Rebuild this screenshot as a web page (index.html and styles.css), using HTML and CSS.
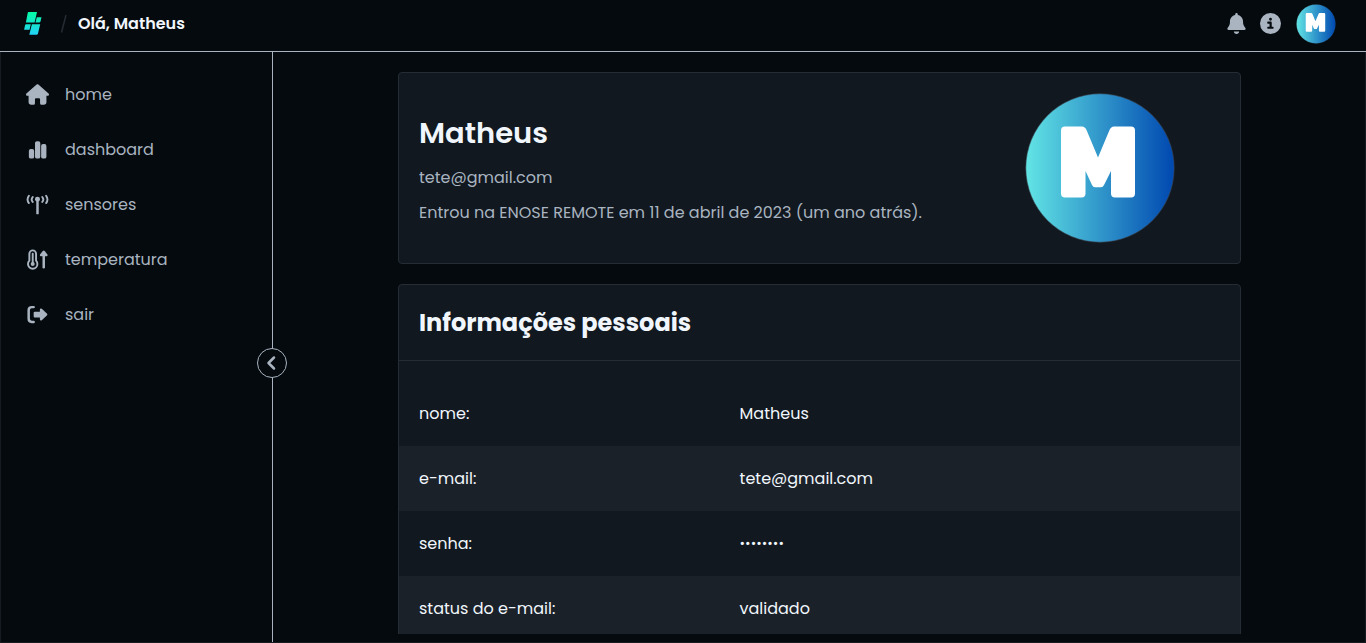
FILE: index.html
```html
<!DOCTYPE html>
<html lang="pt-BR">
<head>
<meta charset="utf-8">
<meta name="viewport" content="width=device-width, initial-scale=1">
<title>Perfil</title>
<link rel="stylesheet" href="styles.css">
</head>
<body>
<div class="app">
  <header class="topbar">
    <a class="logo" href="#" aria-label="Início">
      <svg viewBox="0 0 20 24" width="20" height="24" aria-hidden="true">
        <defs><linearGradient id="brand" gradientUnits="userSpaceOnUse" x1="0" y1="0" x2="0" y2="24"><stop offset="0" stop-color="#05f9a3"/><stop offset="1" stop-color="#24d0fb"/></linearGradient></defs>
        <path fill="url(#brand)" d="M4.500 0H13L10.600 10.600H1.900L3.700 1Q3.900 0 4.500 0ZM12.800 5.200H17.500L16.500 9.500Q16.200 10.600 15 10.600H11.500ZM2.200 12.300H6.800L5.500 17.800H.1L1 13.400Q1.200 12.300 2.200 12.300ZM7.900 12.300H16.200L14 21.600Q13.700 22.800 12.500 22.800H5.300Z"/>
      </svg>
    </a>
    <svg class="slash" viewBox="0 0 8 20" width="8" height="20" aria-hidden="true"><path d="M6 1 1.500 18.500"/></svg>
    <strong class="greeting">Olá, Matheus</strong>
    <div class="actions">
      <button class="icon-button" type="button" aria-label="Notificações">
        <svg viewBox="0 0 448 512" width="19" height="21" aria-hidden="true"><path d="M224 0c-17.700 0-32 14.300-32 32v19.200C119 66 64 130.600 64 208v18.800c0 47-17.300 92.400-48.500 127.600l-7.400 8.300c-8.400 9.400-10.400 22.900-5.300 34.400S19.400 416 32 416h384c12.600 0 24-7.400 29.200-18.900s3.100-25-5.300-34.400l-7.400-8.300C401.300 319.200 384 273.900 384 226.800V208c0-77.400-55-142-128-156.800V32c0-17.700-14.300-32-32-32zm45.300 493.300c12-12 18.700-28.300 18.700-45.300H160c0 17 6.700 33.300 18.700 45.300s28.300 18.700 45.300 18.700 33.300-6.700 45.300-18.700z"/></svg>
      </button>
      <button class="icon-button" type="button" aria-label="Informações">
        <svg viewBox="0 0 512 512" width="21" height="21" aria-hidden="true"><path fill-rule="evenodd" d="M256 0a256 256 0 1 0 0 512 256 256 0 1 0 0-512zM200 210h58c16 0 28 12 28 28v98h22c14 0 24 11 24 24s-10 26-24 26H200c-14 0-24-12-24-26s10-24 24-24h32v-74h-32c-14 0-24-12-24-26s10-26 24-26zm56-92a34 34 0 1 1 0 68 34 34 0 1 1 0-68z"/></svg>
      </button>
      <button class="profile-button" type="button" aria-label="Perfil">
        <svg class="avatar" viewBox="-1 -1 152 152" width="40" height="40" aria-hidden="true"><use href="#avatar-art"/></svg>
      </button>
    </div>
  </header>
  <div class="body">
    <aside class="sidebar">
      <nav class="menu">
        <a class="menu-item" href="#"><svg viewBox="0 0 576 512" width="23" height="21" aria-hidden="true"><path d="M575.800 255.500c0 18-15 32.100-32 32.100h-32l.7 160.200c0 36-28 64.200-64 64.200h-56c-22 0-40-18-40-40v-88c0-17.700-14.300-32-32-32h-64c-17.700 0-32 14.300-32 32v88c0 22-18 40-40 40h-56c-36 0-64-28-64-64V287.600H32c-18 0-32-14-32-32.100 0-9 3-17 10-24L266.400 8c7-7 15-8 22-8s15 2 21 7l255.400 224.500c8 7 12 15 11 24z"/></svg>home</a>
        <a class="menu-item" href="#"><svg viewBox="0 0 24 21" width="23" height="21" aria-hidden="true"><rect x="3" y="10" width="5.500" height="10" rx="2"/><rect x="9.400" y="1.800" width="5.500" height="18.200" rx="2"/><rect x="15.800" y="4.800" width="5.500" height="15.200" rx="2"/></svg>dashboard</a>
        <a class="menu-item" href="#"><svg class="line" viewBox="0 0 24 21" width="23" height="21" aria-hidden="true"><path d="M3 1.500Q.2 5.200 3 9M7 2.700Q4.800 5.200 7 7.800M21 1.500Q23.800 5.200 21 9M17 2.700Q19.200 5.200 17 7.800"/><path class="thick" d="M12 6V19.500"/><circle class="solid" cx="12" cy="5" r="2.600"/></svg>sensores</a>
        <a class="menu-item" href="#"><svg class="line" viewBox="0 0 24 21" width="23" height="21" aria-hidden="true"><path d="M3.500 4.500a3.500 3.500 0 0 1 7 0v7.200q1.400 1.500 1.400 3.500a4.900 4.900 0 0 1-9.800 0q0-2 1.400-3.500ZM7 4.500v10"/><circle class="solid" cx="7" cy="15.200" r="2.100"/><path class="thick" d="M18.500 18.500V5"/><path class="solid" d="M17.500 1.500Q18.500.8 19.500 1.500L22.400 5.200Q22.800 7 21.500 7H15.500Q14.200 7 14.600 5.200Z"/></svg>temperatura</a>
        <a class="menu-item" href="#"><svg class="line" viewBox="0 0 24 21" width="23" height="21" aria-hidden="true"><path class="thick" d="M8 2.800H6Q2.800 2.800 2.800 6V15Q2.800 18.200 6 18.200H8"/><path class="solid" d="M9.200 7.500H14.500V5.300Q14.800 3.800 16.500 4.600L22 9.700Q22.600 10.500 22 11.300L16.500 16.400Q14.800 17.200 14.500 15.700V13.500H9.200Q8 13.500 8 12.200V8.800Q8 7.500 9.200 7.500Z"/></svg>sair</a>
      </nav>
      <button class="collapse" type="button" aria-label="Recolher menu"><svg viewBox="0 0 12 16" width="12" height="16" aria-hidden="true"><path d="M8 2.500 2.500 8 8 13.500"/></svg></button>
    </aside>
    <main class="content">
      <section class="card profile">
        <div class="profile-text">
          <h1>Matheus</h1>
          <p>tete@gmail.com</p>
          <p>Entrou na ENOSE REMOTE em 11 de abril de 2023 (um ano atrás).</p>
        </div>
        <div class="profile-picture">
          <svg class="avatar" viewBox="0 0 150 150" width="150" height="150" role="img" aria-label="Foto de perfil">
            <defs><linearGradient id="sea"><stop offset="0" stop-color="#62e5e5"/><stop offset="1" stop-color="#0048b0"/></linearGradient></defs>
            <g id="avatar-art"><circle cx="75" cy="75" r="74.200" fill="url(#sea)" stroke="#3a4653" stroke-opacity=".6"/><path fill="#fff" d="M40 33.500H57Q60 33.500 61.500 37L73 64.500 84.500 37Q86 33.500 89 33.500H106Q110 33.500 110 37.500V100.500Q110 104.500 106 104.500H90Q86 104.500 86 100.500V78L79 92Q78 94.300 76 94.300H70Q68 94.300 67 92L60.500 78V100.500Q60.500 104.500 56.500 104.500H40Q36 104.500 36 100.500V37.500Q36 33.500 40 33.500Z"/></g>
          </svg>
        </div>
      </section>
      <section class="card details">
        <h2>Informações pessoais</h2>
        <table>
          <tbody>
            <tr><th scope="row">nome:</th><td>Matheus</td></tr>
            <tr><th scope="row">e-mail:</th><td>tete@gmail.com</td></tr>
            <tr><th scope="row"><label for="password">senha:</label></th><td><input class="secret" id="password" type="password" value="12345678" readonly></td></tr>
            <tr><th scope="row">status do e-mail:</th><td>validado</td></tr>
          </tbody>
        </table>
      </section>
    </main>
  </div>
</div>
</body>
</html>
```
FILE: styles.css
```css
* { box-sizing: border-box; }
body { margin: 0; background: #050a0e; color: #f0f6fc; font: 16px/24px Poppins, Inter, sans-serif; }
button { padding: 0; border: 0; background: none; color: inherit; cursor: pointer; }
a { color: inherit; text-decoration: none; }
svg { display: block; flex: none; fill: currentColor; }
h1, h2, p { margin: 0; }

.app { display: flex; flex-direction: column; height: 100vh; border-bottom: 1px solid #161b22; overflow: hidden; }
.topbar { display: flex; flex: none; align-items: center; height: 52px; padding: 0 30px 4px 24px; border-bottom: 1px solid #a9b4c0; }
.slash { margin: 0 10px 0 16px; fill: none; stroke: #262c34; stroke-width: 1.500; }
.greeting { font-weight: 600; }
.actions { display: flex; align-items: center; gap: 14px; margin-left: auto; color: #a9b4c0; }
.icon-button + .profile-button { margin-left: 1px; }

.body { display: flex; flex: 1; min-height: 0; border: 1px solid #161b22; border-width: 0 1px; }
.sidebar { position: relative; flex: none; width: 272px; border-right: 1px solid #a9b4c0; color: #a9b4c0; }
.menu { display: flex; flex-direction: column; padding: 15px 25px; }
.menu-item { display: flex; align-items: center; gap: 16px; height: 55px; }
.line { fill: none; stroke: currentColor; stroke-width: 2; stroke-linecap: round; stroke-linejoin: round; }
.thick { stroke-width: 2.600; }
.solid { fill: currentColor; stroke: none; }
.collapse { position: absolute; right: -15px; bottom: 264px; display: grid; place-items: center; width: 30px; height: 30px; border: 1px solid #a9b4c0; border-radius: 50%; background: #050a0e; }
.collapse svg { fill: none; stroke: currentColor; stroke-width: 2.500; stroke-linecap: round; stroke-linejoin: round; }

.content { display: flex; flex: 1; flex-direction: column; gap: 20px; margin-bottom: 8px; padding: 20px 124px 0 125px; overflow: hidden; }
.card { flex: none; border: 1px solid #262c34; border-radius: 4px; background: #11181f; }
.profile { display: grid; grid-template-columns: 2fr 1fr; align-items: center; padding: 20px 0 20px 20px; }
.profile-text { display: grid; gap: 11px; color: #a9b4c0; }
.profile-text h1 { padding: 2px 0; color: #f0f6fc; font-size: 29px; line-height: 40px; font-weight: 600; }
.profile-picture { display: grid; justify-content: center; padding-right: 6px; }
.details h2 { padding: 20px 20px 19px; border-bottom: 1px solid #262c34; font-size: 24px; line-height: 36px; font-weight: 700; }
table { width: 100%; margin-top: 20px; border-collapse: collapse; table-layout: fixed; }
th, td { height: 65px; padding: 0 0 0 20px; font-weight: 400; text-align: left; }
th { width: 38%; }
td { padding-left: 21px; }
tr:nth-child(even) { background: #1b2128; }
.secret { display: block; width: 100%; padding: 0; border: 0; outline: 0; background: none; color: inherit; font: 500 12px/24px Poppins, Inter, sans-serif; }
```
